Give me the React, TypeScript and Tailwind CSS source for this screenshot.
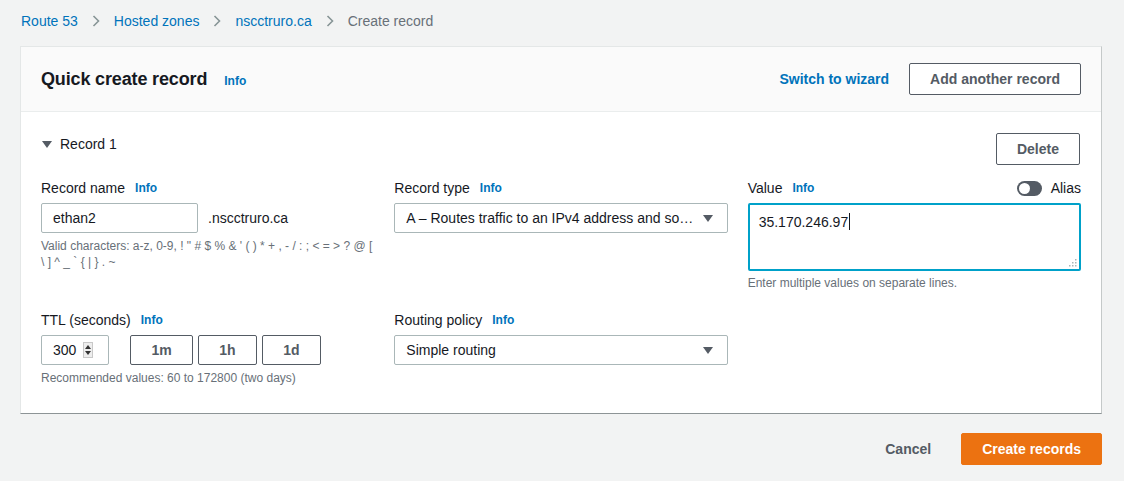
import React from "react";

function Chevron() {
  return (
    <svg width="8" height="12" viewBox="0 0 8 12" className="mx-[14px] shrink-0">
      <path d="M1.5 1 L6.5 6 L1.5 11" fill="none" stroke="#879596" strokeWidth="1.6" />
    </svg>
  );
}

function Info({ className = "" }: { className?: string }) {
  return <span className={"text-[12px] font-bold text-[#0073bb] " + className}>Info</span>;
}

function Caret() {
  return (
    <svg width="10" height="7" viewBox="0 0 10 7" className="shrink-0">
      <path d="M0 0 L10 0 L5 7 Z" fill="#545b64" />
    </svg>
  );
}

function OutlineButton({ children, className = "" }: { children: React.ReactNode; className?: string }) {
  return (
    <button
      className={
        "h-[32px] rounded-[2px] border border-[#545b64] bg-white px-[20px] text-[14px] font-bold text-[#545b64] " +
        className
      }
    >
      {children}
    </button>
  );
}

function Select({ text }: { text: string }) {
  return (
    <div className="mt-[5px] flex h-[30px] items-center justify-between rounded-[2px] border border-[#aab7b8] bg-white pl-[11px] pr-[14px]">
      <span className="truncate">{text}</span>
      <span className="ml-[8px]">
        <Caret />
      </span>
    </div>
  );
}

export default function App() {
  return (
    <div className="min-h-[481px] w-full bg-[#f2f3f3] pl-[20px] pr-[22px] pt-[11px] font-['Liberation_Sans',Arial,sans-serif] text-[14px] text-[#16191f]">
      {/* Breadcrumb */}
      <div className="flex h-[20px] items-center pl-[1px] leading-[20px]">
        <span className="text-[#0073bb]">Route 53</span>
        <Chevron />
        <span className="text-[#0073bb]">Hosted zones</span>
        <Chevron />
        <span className="text-[#0073bb]">nscctruro.ca</span>
        <Chevron />
        <span className="text-[#687078]">Create record</span>
      </div>

      {/* Card */}
      <div className="mt-[15px] border border-[#e4e7e7] border-r-[#c5c9c9] border-b-[#8d9496] bg-white">
        {/* Header */}
        <div className="flex items-center justify-between border-b border-[#eaeded] bg-[#fafafa] px-[20px] py-[16px]">
          <div className="flex items-center">
            <span className="text-[18px] font-bold leading-[22px] tracking-[-0.15px]">Quick create record</span>
            <Info className="ml-[17px] mt-[3px]" />
          </div>
          <div className="flex items-center">
            <span className="font-bold text-[#0073bb]">Switch to wizard</span>
            <OutlineButton className="ml-[20px]">Add another record</OutlineButton>
          </div>
        </div>

        {/* Body */}
        <div className="px-[20px] pb-[27px] pt-[21px]">
          <div className="flex items-start justify-between">
            <div className="mt-[1px] flex h-[20px] items-center leading-[20px]">
              <svg width="10" height="7" viewBox="0 0 10 7" className="ml-[1px]">
                <path d="M0 0 L10 0 L5 7 Z" fill="#545b64" />
              </svg>
              <span className="ml-[8px]">Record 1</span>
            </div>
            <OutlineButton className="mr-[1px]">Delete</OutlineButton>
          </div>

          {/* Row 1 */}
          <div className="mt-[13px] grid grid-cols-3 gap-x-[20px]">
            <div>
              <div className="flex h-[20px] items-center leading-[20px]">
                <span>Record name</span>
                <Info className="ml-[10px]" />
              </div>
              <div className="mt-[5px] flex items-center">
                <div className="flex h-[30px] w-[157px] items-center rounded-[2px] border border-[#aab7b8] px-[11px]">
                  ethan2
                </div>
                <span className="ml-[10px]">.nscctruro.ca</span>
              </div>
              <div className="mt-[5px] text-[12px] leading-[16px] text-[#687078]">
                Valid characters: a-z, 0-9, ! " # $ % &amp; ' ( ) * + , - / : ; &lt; = &gt; ? @ [ \ ] ^ _ ` {"{"} | {"}"} . ~
              </div>
            </div>
            <div>
              <div className="flex h-[20px] items-center leading-[20px]">
                <span>Record type</span>
                <Info className="ml-[10px]" />
              </div>
              <Select text="A – Routes traffic to an IPv4 address and some AWS resources" />
            </div>
            <div>
              <div className="flex h-[20px] items-center justify-between leading-[20px]">
                <div className="flex items-center">
                  <span>Value</span>
                  <Info className="ml-[10px]" />
                </div>
                <div className="flex items-center">
                  <div className="flex h-[15px] w-[25px] items-center rounded-full bg-[#545b64] pl-[2px]">
                    <div className="h-[11px] w-[11px] rounded-full bg-white" />
                  </div>
                  <span className="ml-[9px]">Alias</span>
                </div>
              </div>
              <div className="relative mt-[5px] h-[68px] rounded-[2px] border-2 border-[#00a1c9] px-[9px] pt-[5px] leading-[20px]">
                <span>35.170.246.97</span>
                <span className="ml-[1px] inline-block h-[17px] w-px translate-y-[3px] bg-[#16191f]" />
                <svg width="8" height="8" viewBox="0 0 8 8" className="absolute bottom-[2px] right-[2px]">
                  <rect x="6" y="0" width="1.5" height="1.5" fill="#aab7b8" />
                  <rect x="3" y="3" width="1.5" height="1.5" fill="#aab7b8" />
                  <rect x="6" y="3" width="1.5" height="1.5" fill="#aab7b8" />
                  <rect x="0" y="6" width="1.5" height="1.5" fill="#aab7b8" />
                  <rect x="3" y="6" width="1.5" height="1.5" fill="#aab7b8" />
                  <rect x="6" y="6" width="1.5" height="1.5" fill="#aab7b8" />
                </svg>
              </div>
              <div className="mt-[4px] text-[12px] leading-[16px] text-[#687078]">
                Enter multiple values on separate lines.
              </div>
            </div>
          </div>

          {/* Row 2 */}
          <div className="mt-[19px] grid grid-cols-3 gap-x-[20px]">
            <div>
              <div className="flex h-[20px] items-center leading-[20px]">
                <span>TTL (seconds)</span>
                <Info className="ml-[10px]" />
              </div>
              <div className="mt-[5px] flex items-center">
                <div className="flex h-[30px] w-[68px] items-center rounded-[2px] border border-[#aab7b8] pl-[11px]">
                  <span>300</span>
                  <div className="ml-[7px] flex h-[16px] w-[10px] flex-col items-center justify-center gap-[2px] border border-[#c8c8c8] bg-[#eeeeee]">
                    <svg width="6" height="4" viewBox="0 0 6 4">
                      <path d="M0 4 L6 4 L3 0 Z" fill="#333" />
                    </svg>
                    <svg width="6" height="4" viewBox="0 0 6 4">
                      <path d="M0 0 L6 0 L3 4 Z" fill="#333" />
                    </svg>
                  </div>
                </div>
                <button className="ml-[21px] h-[30px] w-[63px] rounded-[2px] border border-[#545b64] text-[14px] font-bold text-[#545b64]">
                  1m
                </button>
                <button className="ml-[5px] h-[30px] w-[59px] rounded-[2px] border border-[#545b64] text-[14px] font-bold text-[#545b64]">
                  1h
                </button>
                <button className="ml-[5px] h-[30px] w-[59px] rounded-[2px] border border-[#545b64] text-[14px] font-bold text-[#545b64]">
                  1d
                </button>
              </div>
              <div className="mt-[5px] text-[12px] leading-[16px] text-[#687078]">
                Recommended values: 60 to 172800 (two days)
              </div>
            </div>
            <div>
              <div className="flex h-[20px] items-center leading-[20px]">
                <span>Routing policy</span>
                <Info className="ml-[10px]" />
              </div>
              <Select text="Simple routing" />
            </div>
            <div />
          </div>
        </div>
      </div>

      {/* Footer */}
      <div className="mt-[19px] flex items-center justify-end">
        <button className="h-[32px] px-[20px] text-[14px] font-bold text-[#545b64]">Cancel</button>
        <button className="ml-[10px] h-[32px] rounded-[2px] border border-[#ec7211] bg-[#ec7211] px-[20px] text-[14px] font-bold text-white">
          Create records
        </button>
      </div>
    </div>
  );
}
